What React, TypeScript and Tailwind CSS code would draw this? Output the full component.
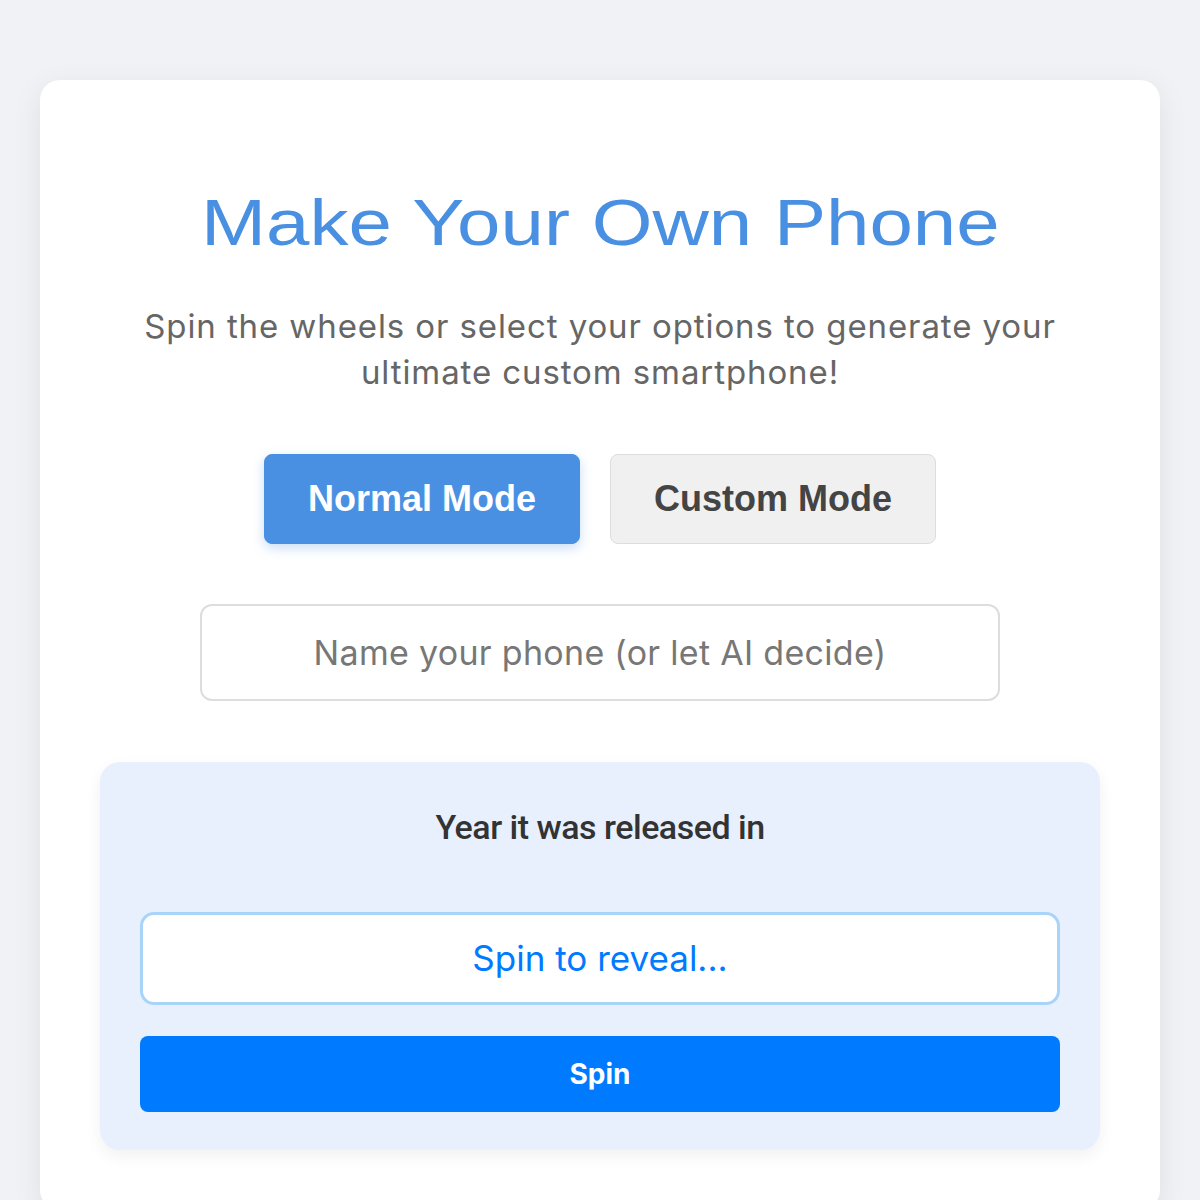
import { useState } from "react";

export default function App() {
  const [mode, setMode] = useState<"normal" | "custom">("normal");
  const [name, setName] = useState("");

  return (
    <div className="min-h-[1200px] bg-[#f0f2f5] px-10 pt-20 font-['Inter',sans-serif]">
      <div className="rounded-[20px] bg-white px-[60px] pt-[105px] pb-[60px] shadow-[0_8px_30px_rgba(0,0,0,0.08)]">
        <div className="flex justify-center">
          <h1 className="inline-block scale-x-[1.22] font-['Liberation_Sans',Arial,sans-serif] text-[64px] leading-[77px] text-[#4a90e2]">
            Make Your Own Phone
          </h1>
        </div>
        <p className="mx-auto mt-[41px] max-w-[960px] text-center text-[33px] leading-[46px] tracking-[0.9px] text-[#666]">
          Spin the wheels or select your options to generate your ultimate custom smartphone!
        </p>

        <div className="mt-[59px] flex justify-center gap-[30px] font-['Liberation_Sans',Arial,sans-serif]">
          <button
            onClick={() => setMode("normal")}
            className={
              mode === "normal"
                ? "h-[90px] w-[316px] rounded-[8px] border border-[#4a90e2] bg-[#4a90e2] text-[36px] font-bold text-white shadow-[0_4px_12px_rgba(74,144,226,0.3)]"
                : "h-[90px] w-[316px] rounded-[8px] border border-[#ddd] bg-[#f0f0f0] text-[36px] font-bold text-[#444]"
            }
          >
            Normal Mode
          </button>
          <button
            onClick={() => setMode("custom")}
            className={
              mode === "custom"
                ? "h-[90px] w-[326px] rounded-[8px] border border-[#4a90e2] bg-[#4a90e2] text-[36px] font-bold text-white shadow-[0_4px_12px_rgba(74,144,226,0.3)]"
                : "h-[90px] w-[326px] rounded-[8px] border border-[#ddd] bg-[#f0f0f0] text-[36px] font-bold text-[#444]"
            }
          >
            Custom Mode
          </button>
        </div>

        <div className="mt-[60px] flex justify-center">
          <input
            value={name}
            onChange={(e) => setName(e.target.value)}
            placeholder="Name your phone (or let AI decide)"
            className="h-[97px] w-[800px] rounded-[12px] border-2 border-[#ddd] bg-white text-center text-[34px] tracking-[0.3px] text-[#333] outline-none placeholder:text-[#777]"
          />
        </div>

        <div className="mt-[61px] rounded-[20px] bg-[#e8f0fe] px-10 pt-10 pb-[38px] shadow-[0_6px_16px_rgba(0,0,0,0.06)]">
          <h3 className="text-center font-['Roboto',sans-serif] text-[34px] font-medium leading-[50px] tracking-[-0.5px] text-[#333]">
            Year it was released in
          </h3>
          <div className="mt-[60px] flex h-[93px] items-center justify-center rounded-[14px] border-[3px] border-[#a9d4fa] bg-white text-[35px] text-[#007aff]">
            Spin to reveal...
          </div>
          <button className="mt-[31px] h-[76px] w-full rounded-[8px] bg-[#007bff] text-[28px] font-bold text-white">
            Spin
          </button>
        </div>
      </div>
    </div>
  );
}
